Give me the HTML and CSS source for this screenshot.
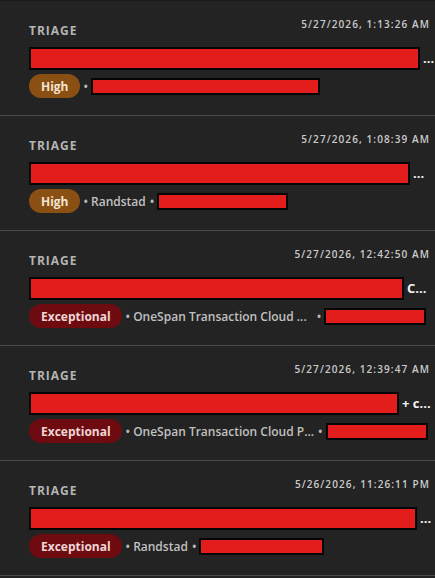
FILE: index.html
```html
<!DOCTYPE html>
<html>
<head>
<meta charset="utf-8">
<link rel="stylesheet" href="styles.css">
</head>
<body>
<div class="list">
  <div class="card">
    <div class="head"><span class="label">TRIAGE</span><span class="date">5/27/2026, 1:13:26 AM</span></div>
    <div class="title"><span class="redact big" style="width:391px"></span><span class="rest">...</span></div>
    <div class="meta"><span class="pill high">High</span><span class="sep">•</span><span class="redact small" style="width:229px"></span></div>
  </div>
  <div class="card">
    <div class="head"><span class="label">TRIAGE</span><span class="date">5/27/2026, 1:08:39 AM</span></div>
    <div class="title"><span class="redact big" style="width:381px"></span><span class="rest">...</span></div>
    <div class="meta"><span class="pill high">High</span><span class="sep">•</span><span class="txt">Randstad</span><span class="sep">•</span><span class="redact small" style="width:131px"></span></div>
  </div>
  <div class="card">
    <div class="head"><span class="label">TRIAGE</span><span class="date">5/27/2026, 12:42:50 AM</span></div>
    <div class="title"><span class="redact big" style="width:375px"></span><span class="rest">C...</span></div>
    <div class="meta"><span class="pill exc">Exceptional</span><span class="sep">•</span><span class="txt">OneSpan Transaction Cloud ...</span><span class="sep wide">•</span><span class="redact small" style="width:102px"></span></div>
  </div>
  <div class="card">
    <div class="head"><span class="label">TRIAGE</span><span class="date">5/27/2026, 12:39:47 AM</span></div>
    <div class="title"><span class="redact big" style="width:370px"></span><span class="rest">+ c...</span></div>
    <div class="meta"><span class="pill exc">Exceptional</span><span class="sep">•</span><span class="txt">OneSpan Transaction Cloud P...</span><span class="sep">•</span><span class="redact small" style="width:102px"></span></div>
  </div>
  <div class="card">
    <div class="head"><span class="label">TRIAGE</span><span class="date">5/26/2026, 11:26:11 PM</span></div>
    <div class="title"><span class="redact big" style="width:388px"></span><span class="rest">...</span></div>
    <div class="meta"><span class="pill exc">Exceptional</span><span class="sep">•</span><span class="txt">Randstad</span><span class="sep">•</span><span class="redact small" style="width:125px"></span></div>
  </div>
</div>
</body>
</html>
```

FILE: styles.css
```css
html, body {
  margin: 0;
  padding: 0;
  background: #232323;
}
body {
  font-family: "Open Sans", "DejaVu Sans", sans-serif;
  border-top: 1px solid #1a1a1a;
}
.list {
  display: flex;
  flex-direction: column;
}
.card {
  box-sizing: border-box;
  padding: 16px 5px 0 29px;
  border-bottom: 1px solid #4b4b4b;
  height: 115px;
  display: flex;
  flex-direction: column;
}
.head {
  display: flex;
  justify-content: space-between;
  align-items: flex-start;
  height: 29px;
}
.label {
  font-size: 12px;
  font-weight: 700;
  letter-spacing: 1px;
  color: #b4b4b4;
  line-height: 16px;
  padding-top: 6px;
}
.date {
  font-size: 10px;
  font-weight: 600;
  letter-spacing: 1.1px;
  color: #cbcbcb;
  line-height: 14px;
}
.title {
  display: flex;
  align-items: center;
  height: 24px;
  white-space: nowrap;
}
.redact {
  display: inline-block;
  box-sizing: border-box;
  background: #e31c1c;
  border: 2px solid #050505;
  flex: none;
}
.redact.big {
  height: 23px;
}
.redact.small {
  height: 17px;
}
.rest {
  color: #f2f2f2;
  font-weight: 700;
  font-size: 13px;
  margin-left: 3px;
}
.meta {
  display: flex;
  align-items: center;
  height: 24px;
  margin-top: 4px;
  white-space: nowrap;
}
.pill {
  display: inline-flex;
  align-items: center;
  height: 24px;
  padding: 0 11px 0 12px;
  border-radius: 12px;
  font-size: 12px;
  font-weight: 700;
  box-sizing: border-box;
}
.pill.high {
  background: #8a4f13;
  color: #f3e3d0;
}
.pill.exc {
  background: #6d0b11;
  color: #f0d6d6;
}
.sep {
  color: #b8b8b8;
  font-size: 12px;
  font-weight: 600;
  margin: 0 3px 0 4px;
}
.sep.wide {
  margin: 0 3px 0 10px;
}
.txt {
  color: #c0c0c0;
  font-size: 12px;
  font-weight: 600;
}
```
